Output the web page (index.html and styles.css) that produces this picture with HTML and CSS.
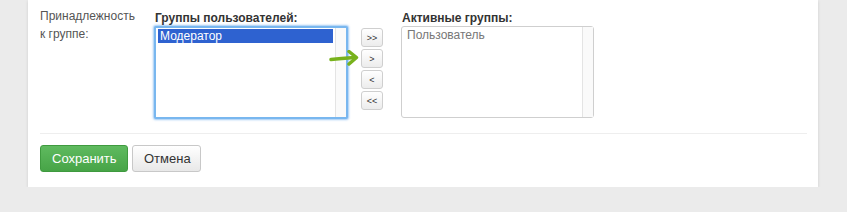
FILE: index.html
```html
<!DOCTYPE html>
<html lang="ru">
<head>
    <meta charset="UTF-8">
    <title>Принадлежность к группе</title>
    <link rel="stylesheet" href="styles.css">
</head>
<body>
    <div class="card">
        <div class="form-row">
            <div class="form-label">Принадлежность<br>к группе:</div>

            <div class="group-col">
                <div class="group-title">Группы пользователей:</div>
                <div class="list-box focused">
                    <div class="list-items">
                        <div class="list-item selected">Модератор</div>
                    </div>
                    <div class="list-scroll"></div>
                </div>
            </div>

            <div class="move-buttons">
                <svg class="hint-arrow" width="30" height="16" viewBox="0 0 30 16">
                    <path d="M2 9.5 C10 8.5 17 8 26 7.5" fill="none" stroke="#78b21c" stroke-width="3.5" stroke-linecap="round"/>
                    <path d="M20 1.5 L27.5 7.5 L20 14" fill="none" stroke="#78b21c" stroke-width="3.5" stroke-linecap="round" stroke-linejoin="round"/>
                </svg>
                <button class="move-btn">&gt;&gt;</button>
                <button class="move-btn">&gt;</button>
                <button class="move-btn">&lt;</button>
                <button class="move-btn">&lt;&lt;</button>
            </div>

            <div class="group-col active-col">
                <div class="group-title">Активные группы:</div>
                <div class="list-box">
                    <div class="list-items">
                        <div class="list-item muted">Пользователь</div>
                    </div>
                    <div class="list-scroll"></div>
                </div>
            </div>
        </div>

        <div class="form-actions">
            <button class="btn btn-success">Сохранить</button>
            <button class="btn btn-default">Отмена</button>
        </div>
    </div>
</body>
</html>
```

FILE: styles.css
```css
* {
    margin: 0;
    padding: 0;
    box-sizing: border-box;
}

body {
    background-color: #ebebeb;
    font-family: 'Liberation Sans', Arial, sans-serif;
    font-size: 12px;
    color: #555;
}

.card {
    width: 790px;
    height: 187px;
    margin-left: 28px;
    padding: 7px 11px 0 12px;
    background-color: #fff;
    box-shadow: 0 1px 3px rgba(0,0,0,0.12);
}

.form-row {
    display: flex;
    align-items: flex-start;
}

.form-label {
    width: 114px;
    line-height: 18px;
    color: #555;
}

.group-col {
    padding-top: 4px;
}

.group-title {
    padding-left: 1px;
    line-height: 15px;
    font-weight: bold;
    color: #333;
}

.list-box {
    display: flex;
    width: 194px;
    height: 93px;
    border: 1px solid #cfcfcf;
    border-radius: 3px;
    background-color: #fff;
}

.list-box.focused {
    border: 2px solid #79b7ef;
    border-radius: 2px;
    box-shadow: 0 0 2px 1px rgba(120,180,240,0.7);
}

.list-items {
    flex: 1;
    padding: 1px 2px 0 2px;
}

.list-item {
    height: 14px;
    line-height: 14px;
    padding-left: 2px;
}

.list-item.selected {
    background-color: #2e62d0;
    color: #fff;
}

.list-item.muted {
    padding-left: 3px;
    color: #777;
}

.list-scroll {
    width: 11px;
    border-left: 1px solid #e4e4e4;
    background-color: #fafafa;
}

.active-col {
    margin-left: 18px;
}

.active-col .list-box {
    width: 193px;
    height: 92px;
}

.move-buttons {
    position: relative;
    display: flex;
    flex-direction: column;
    gap: 2px;
    margin-left: 13px;
    padding-top: 21px;
}

.move-btn {
    width: 22px;
    height: 19px;
    border: 1px solid #cfcfcf;
    border-radius: 3px;
    background: linear-gradient(#ffffff, #ececec);
    font-family: 'Liberation Sans', Arial, sans-serif;
    font-size: 9px;
    color: #333;
}

.hint-arrow {
    position: absolute;
    left: -32px;
    top: 43px;
}

.form-actions {
    display: flex;
    gap: 4px;
    margin-top: 14px;
    padding-top: 11px;
    border-top: 1px solid #eeeeee;
}

.btn {
    height: 27px;
    padding: 0 11px;
    border-radius: 3px;
    font-family: 'Liberation Sans', Arial, sans-serif;
    font-size: 13px;
    cursor: pointer;
}

.btn-success {
    width: 88px;
    border: 1px solid #3f9a3f;
    background: linear-gradient(#5fba5f, #47a447);
    color: #fff;
}

.btn-default {
    width: 69px;
    border: 1px solid #c8c8c8;
    background: linear-gradient(#ffffff, #e8e8e8);
    color: #333;
}
```
